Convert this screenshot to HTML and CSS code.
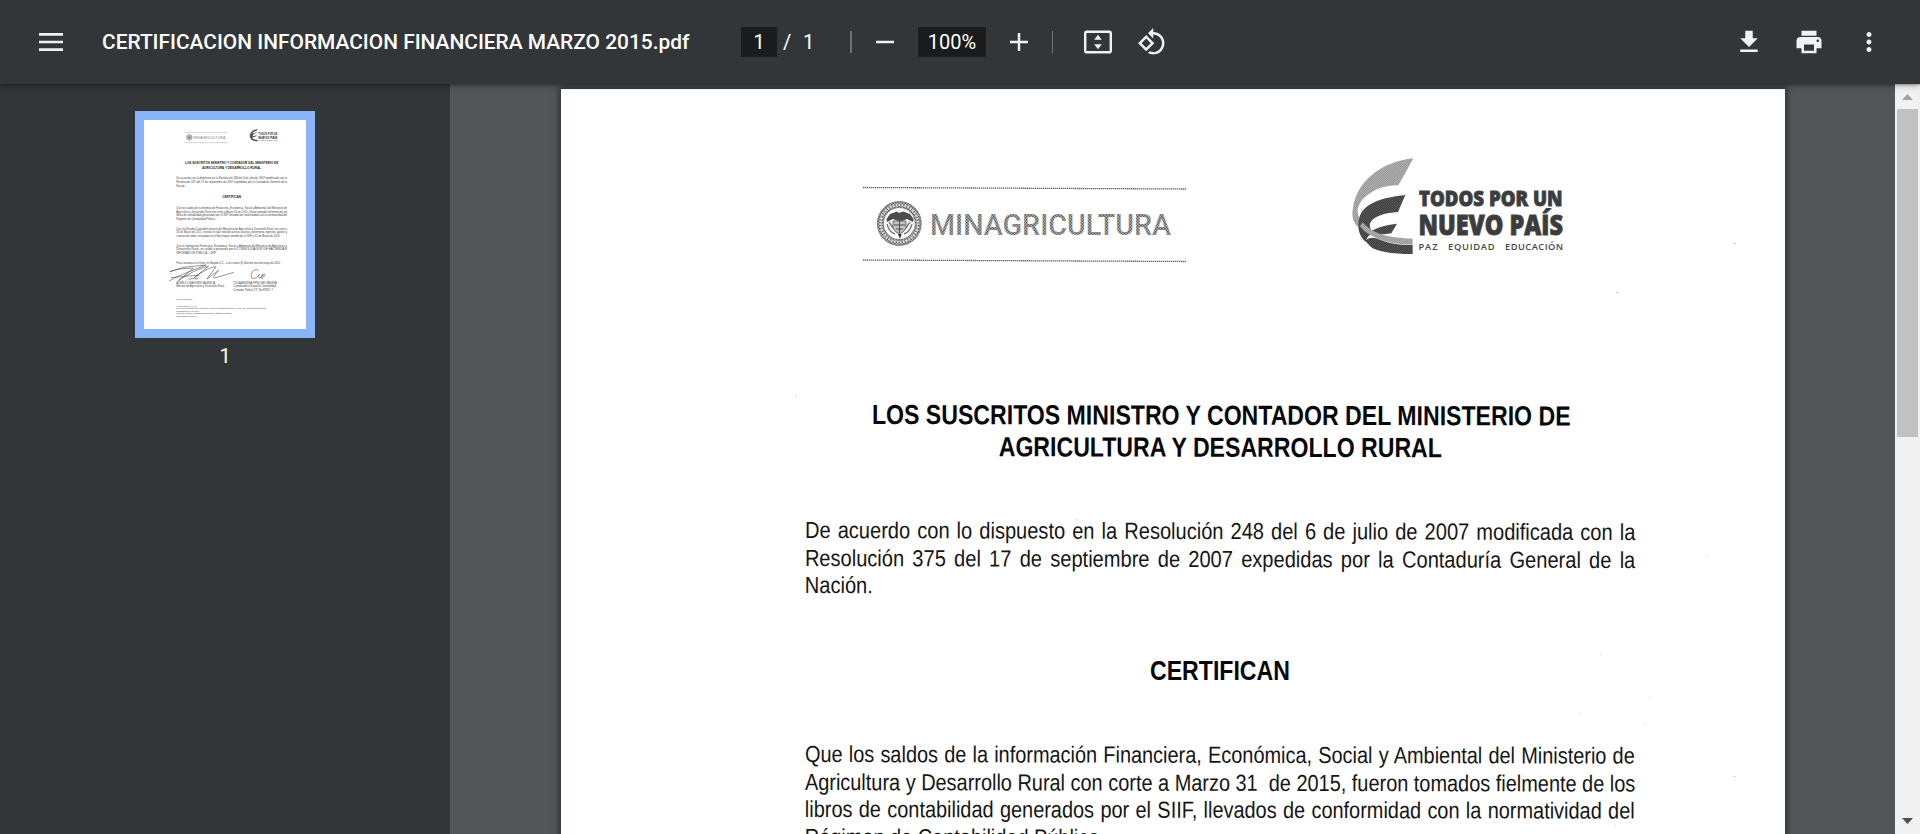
FILE: index.html
```html
<!DOCTYPE html>
<html lang="es">
<head>
<meta charset="utf-8">
<title>CERTIFICACION INFORMACION FINANCIERA MARZO 2015.pdf</title>
<link rel="stylesheet" href="styles.css">
</head>
<body>
<header class="toolbar">
  <svg class="icon menu" viewBox="0 0 24 24"><path d="M2.4 4.8h19.2v2.1H2.4zm0 6.1h19.2V13H2.4zm0 6.1h19.2v2.1H2.4z"/></svg>
  <div class="title"><span>CERTIFICACION INFORMACION FINANCIERA MARZO 2015.pdf</span></div>
  <span class="field page-field">1</span>
  <span class="slash">/</span>
  <span class="total">1</span>
  <span class="divider wide"></span>
  <svg class="icon minus" viewBox="0 0 24 24"><path d="M4.8 11h14.4v2H4.8z"/></svg>
  <span class="field zoom-field">100%</span>
  <svg class="icon plus" viewBox="0 0 24 24"><path d="M4.8 11H11V4.8h2V11h6.2v2H13v6.2h-2V13H4.8z"/></svg>
  <span class="divider"></span>
  <svg class="icon fit" viewBox="0 0 30 30"><rect x="2.200" y="4.700" width="25.600" height="20.600" rx="1.600" fill="none" stroke="#f1f1f1" stroke-width="2.400"/><path d="M15 7.800l3.800 5h-7.600zM15 22.200l-3.800-5h7.600z"/></svg>
  <svg class="icon rotate" viewBox="0 0 24 24"><path d="M7.34 6.41L.86 12.9l6.49 6.48 6.49-6.48-6.5-6.49zM3.69 12.9l3.66-3.66L11 12.9l-3.66 3.66-3.65-3.66zm15.67-6.26C17.61 4.88 15.3 4 13 4V.76L8.76 5 13 9.24V6c1.79 0 3.58.68 4.95 2.05 2.73 2.73 2.73 7.17 0 9.9C16.58 19.32 14.79 20 13 20c-.97 0-1.94-.21-2.84-.61l-1.49 1.49C10.02 21.62 11.51 22 13 22c2.3 0 4.61-.88 6.36-2.64 3.52-3.51 3.52-9.21 0-12.72z"/></svg>
  <div class="actions">
    <svg class="icon" viewBox="0 0 24 24"><path d="M19 9h-4V3H9v6H5l7 7 7-7zM5 18v2h14v-2H5z"/></svg>
    <svg class="icon" viewBox="0 0 24 24"><path d="M19 8H5c-1.66 0-3 1.34-3 3v6h4v4h12v-4h4v-6c0-1.66-1.34-3-3-3zm-3 11H8v-5h8v5zm3-7c-.55 0-1-.45-1-1s.45-1 1-1 1 .45 1 1-.45 1-1 1zm-1-9H6v4h12V3z"/></svg>
    <svg class="icon" viewBox="0 0 24 24"><path d="M12 8c1.100 0 2-.9 2-2s-.9-2-2-2-2 .9-2 2 .9 2 2 2zm0 2c-1.100 0-2 .9-2 2s.9 2 2 2 2-.9 2-2-.9-2-2-2zm0 6c-1.100 0-2 .9-2 2s.9 2 2 2 2-.9 2-2-.9-2-2-2z"/></svg>
  </div>
</header>
<main class="viewer">
  <aside class="sidebar">
    <div class="thumb">
      <svg class="thumb-page" viewBox="42 45 486 627">
        <g stroke="#aaa" stroke-width="1.500"><path d="M163 82H292M163 113H292"/></g>
        <circle cx="178" cy="97" r="8" fill="#ccc" stroke="#777" stroke-width="2"/><circle cx="178" cy="97" r="3.500" fill="#777"/>
        <g class="t-logo">
          <text x="190" y="102" font-size="13" fill="#888" textLength="96" lengthAdjust="spacingAndGlyphs">MINAGRICULTURA</text>
          <text x="385" y="91" font-size="9" font-weight="bold" fill="#333" textLength="57" lengthAdjust="spacingAndGlyphs">TODOS POR UN</text>
          <text x="385" y="102" font-size="11" font-weight="bold" fill="#222" textLength="57" lengthAdjust="spacingAndGlyphs">NUEVO PAÍS</text>
          <text x="385" y="108" font-size="4" fill="#444" textLength="57">PAZ EQUIDAD EDUCACIÓN</text>
        </g>
        <path d="M383 72Q360 76 359 94Q361 110 383 109L383 104Q370 104 366 98L379 94L380 91L367 94Q369 86 379 84L381 81L366 86Q369 80 380 77Z" fill="#555"/>
        <g class="t-head">
          <text x="165" y="178" textLength="280" lengthAdjust="spacingAndGlyphs">LOS SUSCRITOS MINISTRO Y CONTADOR DEL MINISTERIO DE</text>
          <text x="216" y="191" textLength="177" lengthAdjust="spacingAndGlyphs">AGRICULTURA Y DESARROLLO RURAL</text>
          <text x="277" y="279" textLength="56" lengthAdjust="spacingAndGlyphs">CERTIFICAN</text>
        </g>
        <g class="t-body">
          <text x="139" y="223" textLength="332" lengthAdjust="spacingAndGlyphs">De acuerdo con lo dispuesto en la Resolución 248 del 6 de julio de 2007 modificada con la</text>
          <text x="139" y="234" textLength="332" lengthAdjust="spacingAndGlyphs">Resolución 375 del 17 de septiembre de 2007 expedidas por la Contaduría General de la</text>
          <text x="139" y="245" textLength="27" lengthAdjust="spacingAndGlyphs">Nación.</text>
          <text x="139" y="312" textLength="332" lengthAdjust="spacingAndGlyphs">Que los saldos de la información Financiera, Económica, Social y Ambiental del Ministerio de</text>
          <text x="139" y="323" textLength="332" lengthAdjust="spacingAndGlyphs">Agricultura y Desarrollo Rural con corte a Marzo 31 de 2015, fueron tomados fielmente de los</text>
          <text x="139" y="334" textLength="332" lengthAdjust="spacingAndGlyphs">libros de contabilidad generados por el SIIF, llevados de conformidad con la normatividad del</text>
          <text x="139" y="345" textLength="118" lengthAdjust="spacingAndGlyphs">Régimen de Contabilidad Pública.</text>
          <text x="139" y="374" textLength="332" lengthAdjust="spacingAndGlyphs">Que los Estados Contables básicos del Ministerio de Agricultura y Desarrollo Rural con corte a</text>
          <text x="139" y="385" textLength="332" lengthAdjust="spacingAndGlyphs">31 de Marzo de 2015, revelan el valor total de activos, pasivos, patrimonio, ingresos, gastos y</text>
          <text x="139" y="396" textLength="312" lengthAdjust="spacingAndGlyphs">cuentas de orden, reveladas en el libro mayor emitido por el SIIF a 31 de Marzo de 2015.</text>
          <text x="139" y="425" textLength="332" lengthAdjust="spacingAndGlyphs">Que la información Financiera, Económica, Social y Ambiental del Ministerio de Agricultura y</text>
          <text x="139" y="436" textLength="332" lengthAdjust="spacingAndGlyphs">Desarrollo Rural, se validó y presentó por el CONSOLIDADOR DE HACIENDA E</text>
          <text x="139" y="447" textLength="120" lengthAdjust="spacingAndGlyphs">INFORMACIÓN PÚBLICA – CHIP.</text>
          <text x="139" y="477" textLength="313" lengthAdjust="spacingAndGlyphs">Para constancia se firma, en Bogotá D.C., a los cuatro (4) días del mes de mayo de 2015.</text>
          <text x="139" y="536" textLength="116" lengthAdjust="spacingAndGlyphs">AURELIO IRAGORRI VALENCIA</text>
          <text x="139" y="547" textLength="143" lengthAdjust="spacingAndGlyphs">Ministro de Agricultura y Desarrollo Rural</text>
          <text x="310" y="536" textLength="130" lengthAdjust="spacingAndGlyphs">TULIA ANDREA PERDOMO MEDINA</text>
          <text x="310" y="547" textLength="128" lengthAdjust="spacingAndGlyphs">Coordinadora Grupo de Contabilidad</text>
          <text x="310" y="558" textLength="119" lengthAdjust="spacingAndGlyphs">Contador Público T.P. No.87892 -T</text>
        </g>
        <g class="t-foot">
          <text x="139" y="584" textLength="48" lengthAdjust="spacingAndGlyphs">Proyectó: TPerdomo</text>
          <text x="139" y="606" textLength="62" lengthAdjust="spacingAndGlyphs">Avenida Jiménez N° 7A-17</text>
          <text x="139" y="612" textLength="268" lengthAdjust="spacingAndGlyphs">Recepción Correspondencia y Oficina de Atención al Ciudadano: carrera 8 N° 12B – 31 – Código Postal No. 8115</text>
          <text x="139" y="620" textLength="68" lengthAdjust="spacingAndGlyphs">Conmutador (57 1) 254 33 00</text>
          <text x="139" y="628" textLength="164" lengthAdjust="spacingAndGlyphs">Línea de Atención Gratuita 018000510050 / Bogotá Colombia</text>
          <text x="139" y="635" textLength="62" lengthAdjust="spacingAndGlyphs">www.minagricultura.gov.co</text>
        </g>
        <g fill="none" stroke="#444" stroke-width="1.700"><path d="M120 500L160 487L228 480L180 499L146 513L117 528M120 500Q150 488 190 490L145 527Q190 495 236 483L193 518Q230 488 258 485L231 522L266 496Q244 521 253 519L312 502M122 518L208 510M175 523Q214 515 199 524"/><path d="M386 498Q378 488 367 500Q359 516 369 521Q379 522 388 508Q383 524 394 517L398 508Q392 524 399 520M398 512Q406 503 405 512Q402 518 399 514M413 520h1"/></g>
      </svg>
    </div>
    <div class="thumb-label">1</div>
  </aside>
  <section class="canvas">
    <article class="page">
      <svg class="letterhead" viewBox="561 89 1224 300">
        <defs>
          <pattern id="tone" width="3" height="3" patternUnits="userSpaceOnUse"><rect width="3" height="3" fill="#b0b0b0"/><path d="M0 0h1.500v1.500H0zM1.500 1.500H3V3H1.500z" fill="#606060"/></pattern>
          <pattern id="pale" width="7" height="7" patternUnits="userSpaceOnUse"><rect width="7" height="7" fill="#c0c0c0"/><path d="M0 0h3.500v3.500H0zM3.500 3.500H7V7H3.500z" fill="#888"/></pattern>
          <pattern id="dark" width="7" height="7" patternUnits="userSpaceOnUse"><rect width="7" height="7" fill="#303030"/><path d="M0 0h3.500v3.500H0zM3.500 3.500H7V7H3.500z" fill="#646464"/></pattern>
        </defs>
        <g stroke="#666" stroke-width="1.300" stroke-dasharray="1.400 .6"><path d="M863 187.500L1186 189M863 260L1186 261.500"/></g>
        <circle cx="899.300" cy="223.500" r="18.700" fill="none" stroke="url(#tone)" stroke-width="6.500"/>
        <circle cx="899.300" cy="223.500" r="18.700" fill="none" stroke="#e2e2e2" stroke-width="2.600" stroke-dasharray="1.500 1.500"/>
        <circle cx="899.300" cy="223.500" r="22" fill="none" stroke="#777" stroke-width=".8"/>
        <path d="M899 213l-2-1.500-3 1-4 1.500-3.500 5 .5 3 6-3 5 2 2 3 2-3 5-2 6 3 .5-3-3.500-5-4-1.500-3-1z" fill="#4c4c4c"/>
        <path d="M893 221h13v7q-2 4-6.500 6q-5-2-6.500-6z" fill="#c4c4c4" stroke="#666"/>
        <path d="M887 224q2 8 8 10M912 224q-2 8-8 10M889 222l4 6M910 222l-4 6" fill="none" stroke="#777" stroke-width="1.400"/>
        <path d="M894 225h11M896 229h7M899.500 221v12" stroke="#444" stroke-width=".9"/><path d="M898 234h3.500l-1.500 5z" fill="#333"/>
        <text class="minag" x="930" y="234.800" textLength="241" lengthAdjust="spacingAndGlyphs">MINAGRICULTURA</text>
        <g transform="translate(1330 145) scale(.33333)">
          <path fill="url(#pale)" d="M250 40C155 50 78 108 68 195C65 218 71 235 85 247L88 218C78 200 84 180 98 163C125 134 165 120 205 121Q226 85 250 40Z"/>
          <path fill="url(#dark)" d="M226 150C160 156 98 176 88 218C80 248 88 272 106 290Q116 266 128 268Q154 270 184 265L201 236Q156 240 125 257Q113 240 126 226Q145 205 204 201Z"/>
          <path fill="url(#pale)" d="M97 232Q120 258 160 270Q200 280 248 281V299Q188 299 145 282Q105 266 90 244Z"/>
          <path fill="url(#dark)" d="M86 252Q95 280 122 305Q148 326 248 327V300Q190 301 150 284Q122 271 106 286Q90 270 86 252Z"/>
        </g>
        <g class="todos">
          <text x="1419" y="206.300" font-size="21.500" textLength="143.500" lengthAdjust="spacingAndGlyphs">TODOS POR UN</text>
          <text x="1418.500" y="234.500" font-size="28" textLength="144.500" lengthAdjust="spacingAndGlyphs">NUEVO PAÍS</text>
        </g>
        <g class="motto">
          <text x="1418.500" y="249.500" textLength="19">PAZ</text>
          <text x="1448" y="249.500" textLength="46.500">EQUIDAD</text>
          <text x="1505" y="249.500" textLength="58">EDUCACIÓN</text>
        </g>
        <g fill="#ccc"><path d="M1734 243h2v1h-2zM1077 268h1v1h-1zM1616 292h2v1h-2z"/></g>
      </svg>
      <h1 class="heading">
        <span class="line head-a">LOS SUSCRITOS MINISTRO Y CONTADOR DEL MINISTERIO DE</span>
        <span class="line head-b">AGRICULTURA Y DESARROLLO RURAL</span>
      </h1>
      <p class="para first">
        <span class="line">De acuerdo con lo dispuesto en la Resolución 248 del 6 de julio de 2007 modificada con la</span>
        <span class="line">Resolución 375 del 17 de septiembre de 2007 expedidas por la Contaduría General de la</span>
        <span class="line last">Nación.</span>
      </p>
      <h2 class="certify"><span class="line head-c">CERTIFICAN</span></h2>
      <p class="para second">
        <span class="line">Que los saldos de la información Financiera, Económica, Social y Ambiental del Ministerio de</span>
        <span class="line">Agricultura y Desarrollo Rural con corte a Marzo 31&nbsp; de 2015, fueron tomados fielmente de los</span>
        <span class="line">libros de contabilidad generados por el SIIF, llevados de conformidad con la normatividad del</span>
        <span class="line last">Régimen de Contabilidad Pública.</span>
      </p>
      <svg class="specks" viewBox="561 89 1224 745"><path d="M796 395h1v2h-1zM1706 555h2v1h-2zM1733 776h3v1h-3zM1600 654h2v1h-2zM1649 697h2v1h-2zM1578 713h2v1h-2zM1644 724h2v1h-2zM1614 825h2v1h-2zM1076 519h2v1h-2zM1046 557h1v1h-1z"/></svg>
    </article>
  </section>
  <div class="scrollbar">
    <svg class="arrow up" viewBox="0 0 11 6"><path d="M5.500 0L11 6H0z" fill="#a3a3a3"/></svg>
    <div class="scroll-thumb"></div>
    <svg class="arrow down" viewBox="0 0 11 6"><path d="M5.500 6L11 0H0z" fill="#505050"/></svg>
  </div>
</main>
</body>
</html>
```

FILE: styles.css
```css
* { box-sizing: border-box; }
body {
  margin: 0;
  height: 834px;
  overflow: hidden;
  display: flex;
  flex-direction: column;
  background: #525659;
  font-family: Roboto, "Liberation Sans", sans-serif;
  color: #fff;
}

/* Toolbar */
.toolbar {
  position: relative;
  z-index: 2;
  flex: none;
  display: flex;
  align-items: center;
  height: 84px;
  padding: 0 36px;
  background: #323639;
  box-shadow: 0 -2px 8px rgba(0, 0, 0, .09), 0 4px 8px rgba(0, 0, 0, .06), 0 1px 2px rgba(0, 0, 0, .3), 0 2px 6px rgba(0, 0, 0, .15);
  font-size: 20px;
}
.icon { flex: none; width: 30px; height: 30px; fill: #f1f1f1; }
.title {
  flex: none;
  width: 675px;
  padding-left: 36px;
  font-size: 20.900px;
  font-weight: 500;
  white-space: nowrap;
}
.field {
  display: flex;
  align-items: center;
  justify-content: center;
  height: 30px;
  background: #191b1c;
}
.page-field { width: 36px; }
.slash { width: 8px; margin-left: 6px; }
.total { width: 12px; margin-left: 12px; }
.divider { width: 1px; height: 22px; background: #6f7274; }
.divider.wide { width: 2px; margin-left: 35px; }
.minus { margin-left: 18px; }
.zoom-field { width: 68px; margin-left: 18px; }
.plus { margin-left: 18px; margin-right: 18px; }
.fit { margin-left: 30px; }
.rotate { margin-left: 24px; }
.actions { display: flex; gap: 30px; margin-left: auto; }

/* Body of the viewer */
.viewer { flex: 1; display: flex; min-height: 0; }
.sidebar {
  width: 450px;
  display: flex;
  flex-direction: column;
  align-items: center;
  padding-top: 27px;
  background: #323639;
}
.thumb { width: 180px; height: 227px; padding: 9px; background: #8ab4f8; }
.thumb-page { display: block; width: 162px; height: 209px; background: #fff; font-family: "Liberation Sans", Arial, sans-serif; }
.t-head { font-size: 12px; font-weight: bold; fill: #1c1c1c; }
.t-body { font-size: 9.500px; fill: #404040; }
.t-foot { font-size: 5.500px; fill: #333; }
.thumb-label { margin-top: 6px; font-size: 20px; line-height: 24px; }

.canvas { flex: 1; overflow: hidden; padding: 5px 0 0 111px; background: #525659; }
.page {
  position: relative;
  width: 1223.500px;
  height: 1584px;
  background: #fff;
  box-shadow: 0 0 6px 2px rgba(30, 36, 40, .75);
  color: #161616;
  font-family: "Liberation Sans", Arial, sans-serif;
}
.letterhead { display: block; width: 1224px; height: 300px; }
.minag { font-family: Roboto, sans-serif; font-size: 29px; font-weight: 500; fill: url(#tone); }
.todos { font-family: "Open Sans", "Noto Sans", sans-serif; font-weight: 800; fill: #3c3c3c; stroke: #444; stroke-width: .9px; }
.motto { font-family: "Open Sans", "Noto Sans", sans-serif; font-size: 9.300px; font-weight: 600; fill: #484848; }
.specks { position: absolute; left: 0; top: 0; width: 1224px; height: 745px; fill: #ddd; }

/* Condensed document type, one block per printed line */
.line { display: block; white-space: nowrap; text-align: justify; text-align-last: justify; }
.line.last { text-align-last: left; }
.heading, .certify, .para { margin: 0; transform-origin: 0 0; }
.heading, .certify { font-size: 27.500px; line-height: 32.300px; font-weight: bold; color: #080808; }
.heading { margin: 9.500px 0 0 311px; width: 828px; transform: rotate(.12deg) scaleX(.84); }
.head-b { width: 525px; margin-left: 151px; }
.certify { margin: 56px 0 0 589px; width: 166px; transform: scaleX(.84); }
.para { width: 960px; font-size: 23.200px; line-height: 27.600px; transform: rotate(.14deg) scaleX(.865); }
.first { margin: 53.500px 0 0 244px; }
.second { margin: 53px 0 0 243.500px; width: 966px; transform: rotate(.11deg) scaleX(.859); }

.scrollbar {
  width: 25px;
  display: flex;
  flex-direction: column;
  align-items: center;
  padding: 10px 0;
  background: #f1f1f1;
}
.arrow { width: 11px; height: 6px; }
.scroll-thumb { width: 21px; height: 328px; margin-top: 9px; background: #c1c1c1; }
.down { margin-top: auto; }
```
